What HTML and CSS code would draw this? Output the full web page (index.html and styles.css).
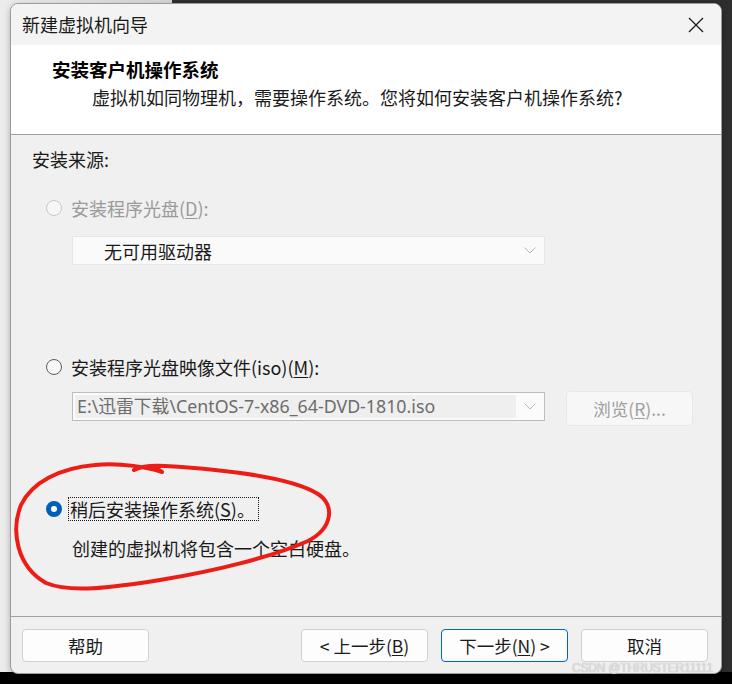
FILE: index.html
```html
<!DOCTYPE html>
<html lang="zh-CN">
<head>
<meta charset="utf-8">
<title>新建虚拟机向导</title>
<link rel="stylesheet" href="styles.css">
</head>
<body>
<div class="window">
  <div class="titlebar">
    <span class="title">新建虚拟机向导</span>
    <svg class="close" width="16" height="16" viewBox="0 0 16 16"><path d="M1 1 L15 15 M15 1 L1 15" stroke="#1a1a1a" stroke-width="1.3" fill="none"/></svg>
  </div>
  <div class="header">
    <div class="h-title">安装客户机操作系统</div>
    <div class="h-sub">虚拟机如同物理机，需要操作系统。您将如何安装客户机操作系统?</div>
  </div>
  <div class="content">
    <div class="section-label">安装来源:</div>

    <div class="radio-row r1 disabled">
      <span class="radio"></span>
      <span class="label">安装程序光盘(<u>D</u>):</span>
    </div>
    <div class="combo combo1">
      <span class="combo-text">无可用驱动器</span>
      <span class="chev-box"><svg width="12" height="7" viewBox="0 0 12 7"><path d="M0.5 0.5 L6 6 L11.5 0.5" stroke="#b8b8b8" stroke-width="1" fill="none"/></svg></span>
    </div>

    <div class="radio-row r2">
      <span class="radio"></span>
      <span class="label">安装程序光盘映像文件(iso)(<u>M</u>):</span>
    </div>
    <div class="iso-row">
      <div class="combo combo2">
        <span class="combo-edit">E:\迅雷下载\CentOS-7-x86_64-DVD-1810.iso</span>
        <span class="chev-box"><svg width="12" height="7" viewBox="0 0 12 7"><path d="M0.5 0.5 L6 6 L11.5 0.5" stroke="#b8b8b8" stroke-width="1" fill="none"/></svg></span>
      </div>
      <div class="btn browse">浏览(<u>R</u>)...</div>
    </div>

    <div class="radio-row r3">
      <span class="radio checked"></span>
      <span class="label focus">稍后安装操作系统(<u>S</u>)。</span>
    </div>
    <div class="desc">创建的虚拟机将包含一个空白硬盘。</div>
  </div>
  <div class="footer">
    <div class="btn">帮助</div>
    <div class="spacer"></div>
    <div class="btn">&lt; 上一步(<u>B</u>)</div>
    <div class="btn primary">下一步(<u>N</u>) &gt;</div>
    <div class="btn">取消</div>
  </div>
</div>
<div class="watermark">CSDN @THRUSTER11111</div>
<svg class="scribble" width="732" height="684" viewBox="0 0 732 684">
  <path d="M134 470 C142 465, 156 466, 162 472 C150 468, 120 462, 95 465 C60 468, 32 482, 21 505 C11 530, 16 566, 46 583 C70 593, 110 588, 160 580 C215 571, 272 557, 308 541 C333 528, 335 505, 318 494 C292 478, 232 470, 165 466 C150 465, 140 467, 134 470" stroke="#ee1c16" stroke-width="4" fill="none" stroke-linecap="round" stroke-linejoin="round"/>
</svg>
</body>
</html>
```

FILE: styles.css
```css
html, body {
  margin: 0;
  padding: 0;
}
body {
  width: 732px;
  height: 684px;
  overflow: hidden;
  position: relative;
  background:
    linear-gradient(to bottom, rgba(0,0,0,0) 0, rgba(0,0,0,0) 672px, #000 672px),
    linear-gradient(to right, #ececec 0, #d6d6d6 172px, #2e2e2e 172px, #2e2e2e 100%);
  font-family: "Noto Sans", "Noto Sans CJK SC", sans-serif;
  color: #1a1a1a;
}
.window {
  margin: 3px 0 0 10px;
  width: 710px;
  height: 669px;
  border: 1px solid #9c9c9c;
  border-radius: 8px;
  overflow: hidden;
  background: #f0f0f0;
  display: flex;
  flex-direction: column;
  box-shadow: 0 2px 6px rgba(0,0,0,0.25);
}
.titlebar {
  height: 41px;
  background: #f3f3f3;
  display: flex;
  align-items: center;
  justify-content: space-between;
  padding: 0 17px 0 11px;
  flex: none;
}
.title {
  font-family: "Noto Sans CJK SC", sans-serif;
  font-size: 18px;
  line-height: 24px;
  color: #1a1a1a;
  margin-top: -2px;
}
.close {
  display: block;
}
.header {
  height: 89px;
  background: #ffffff;
  border-bottom: 1px solid #a0a0a0;
  flex: none;
}
.h-title {
  font-family: "Noto Sans CJK SC", sans-serif;
  font-weight: bold;
  font-size: 18.5px;
  line-height: 24px;
  margin: 12px 0 0 41px;
  color: #000;
}
.h-sub {
  font-family: "Noto Sans CJK SC", sans-serif;
  font-size: 18px;
  line-height: 24px;
  margin: 4px 0 0 81px;
  color: #1a1a1a;
}
.content {
  flex: 1;
  padding-left: 21px;
  font-size: 18px;
  font-family: "Noto Sans CJK SC", sans-serif;
}
.section-label {
  line-height: 24px;
  margin-top: 12px;
}
.radio-row {
  display: flex;
  align-items: center;
  height: 24px;
  margin-left: 14px;
}
.r1 { margin-top: 25px; }
.r2 { margin-top: 90px; }
.r3 { margin-top: 71px; }
.radio {
  width: 14px;
  height: 14px;
  border: 1px solid #5c5c5c;
  border-radius: 50%;
  background: #f7f7f7;
  flex: none;
  margin-right: 9px;
  box-sizing: content-box;
}
.disabled .radio {
  border-color: #c8c8c8;
  background: #f7f7f7;
}
.disabled .label {
  color: #9a9a9a;
}
.radio.checked {
  width: 6px;
  height: 6px;
  border: 5px solid #005fb8;
  background: #ffffff;
}
.label {
  line-height: 22px;
  color: #1a1a1a;
}
.label.focus {
  outline: 1px dotted #1a1a1a;
  outline-offset: 0;
  margin-left: -2px;
  padding: 0 3px 0 1px;
}
u {
  text-decoration-thickness: 1px;
  text-underline-offset: 2px;
}
.combo {
  width: 471px;
  height: 27px;
  border: 1px solid #e6e6e6;
  background: #fafafa;
  display: flex;
  align-items: center;
  justify-content: space-between;
  box-sizing: content-box;
}
.combo1 {
  margin: 16px 0 0 40px;
}
.combo-text {
  margin-left: 31px;
  line-height: 24px;
  color: #1a1a1a;
}
.chev-box {
  width: 28px;
  flex: none;
  display: flex;
  justify-content: center;
  align-items: center;
  align-self: stretch;
}
.chev-box svg {
  display: block;
}
.iso-row {
  display: flex;
  align-items: flex-start;
  margin: 12px 0 0 40px;
}
.combo2 {
  border-color: #bdbdbd;
  background: #fbfbfb;
  margin-top: 1px;
}
.combo-edit {
  flex: 1;
  align-self: stretch;
  margin: 2px 0 2px 2px;
  background: #efefef;
  font-family: "Noto Sans", "Noto Sans CJK SC", sans-serif;
  font-size: 17.8px;
  line-height: 23px;
  color: #6d6d6d;
  padding-left: 2px;
  white-space: nowrap;
  overflow: hidden;
}
.btn {
  width: 125px;
  height: 31px;
  border: 1px solid #d0d0d0;
  border-radius: 4px;
  background: #fdfdfd;
  display: flex;
  align-items: center;
  justify-content: center;
  font-family: "Noto Sans CJK SC", sans-serif;
  font-size: 17.5px;
  color: #1a1a1a;
  box-sizing: content-box;
  flex: none;
}
.browse {
  margin-left: 21px;
  height: 33px;
  border-color: #e8e8e8;
  background: #f7f7f7;
  color: #a0a0a0;
}
.desc {
  line-height: 24px;
  margin: 15px 0 0 40px;
}
.footer {
  height: 57px;
  border-top: 1px solid #a0a0a0;
  display: flex;
  align-items: flex-start;
  padding: 12px 13px 0 11px;
  gap: 13px;
  flex: none;
  box-sizing: border-box;
}
.spacer {
  flex: 1;
}
.btn.primary {
  border-color: #0067c0;
}
.watermark {
  position: absolute;
  left: 572px;
  top: 661px;
  font-family: "Liberation Sans", sans-serif;
  font-size: 12px;
  color: rgba(230,230,230,0.85);
  text-shadow: 0 0 1px rgba(120,120,120,0.6);
  letter-spacing: -0.2px;
}
.scribble {
  position: absolute;
  left: 0;
  top: 0;
  pointer-events: none;
}
```
